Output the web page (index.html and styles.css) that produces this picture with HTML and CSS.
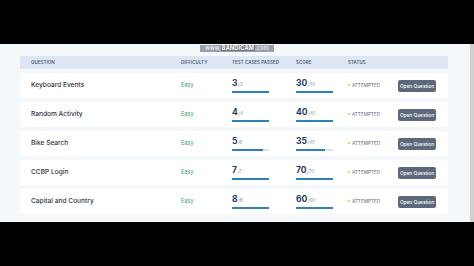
FILE: index.html
```html
<!DOCTYPE html>
<html>
<head>
<meta charset="utf-8">
<link rel="stylesheet" href="styles.css">
</head>
<body>
<div class="topbar"></div>
<div class="screen">
  <div class="watermark">www.<b>BANDICAM</b>.com</div>
  <div class="content">
    <div class="table">
      <div class="row head">
        <div>QUESTION</div>
        <div>DIFFICULTY</div>
        <div>TEST CASES PASSED</div>
        <div>SCORE</div>
        <div>STATUS</div>
        <div></div>
      </div>
      <div class="row item">
        <div class="q">Keyboard Events</div>
        <div class="easy">Easy</div>
        <div class="num"><div class="val"><b>3</b><span>/3</span></div><div class="bar"><i style="width:100%"></i></div></div>
        <div class="num"><div class="val"><b>30</b><span>/30</span></div><div class="bar"><i style="width:100%"></i></div></div>
        <div class="status"><span class="dot"></span>ATTEMPTED</div>
        <div class="act"><button class="btn">Open Question</button></div>
      </div>
      <div class="row item">
        <div class="q">Random Activity</div>
        <div class="easy">Easy</div>
        <div class="num"><div class="val"><b>4</b><span>/4</span></div><div class="bar"><i style="width:100%"></i></div></div>
        <div class="num"><div class="val"><b>40</b><span>/40</span></div><div class="bar"><i style="width:100%"></i></div></div>
        <div class="status"><span class="dot"></span>ATTEMPTED</div>
        <div class="act"><button class="btn">Open Question</button></div>
      </div>
      <div class="row item">
        <div class="q">Bike Search</div>
        <div class="easy">Easy</div>
        <div class="num"><div class="val"><b>5</b><span>/6</span></div><div class="bar"><i style="width:83%"></i></div></div>
        <div class="num"><div class="val"><b>35</b><span>/45</span></div><div class="bar"><i style="width:78%"></i></div></div>
        <div class="status"><span class="dot"></span>ATTEMPTED</div>
        <div class="act"><button class="btn">Open Question</button></div>
      </div>
      <div class="row item">
        <div class="q">CCBP Login</div>
        <div class="easy">Easy</div>
        <div class="num"><div class="val"><b>7</b><span>/7</span></div><div class="bar"><i style="width:100%"></i></div></div>
        <div class="num"><div class="val"><b>70</b><span>/70</span></div><div class="bar"><i style="width:100%"></i></div></div>
        <div class="status"><span class="dot"></span>ATTEMPTED</div>
        <div class="act"><button class="btn">Open Question</button></div>
      </div>
      <div class="row item">
        <div class="q">Capital and Country</div>
        <div class="easy">Easy</div>
        <div class="num"><div class="val"><b>8</b><span>/8</span></div><div class="bar"><i style="width:100%"></i></div></div>
        <div class="num"><div class="val"><b>60</b><span>/60</span></div><div class="bar"><i style="width:100%"></i></div></div>
        <div class="status"><span class="dot"></span>ATTEMPTED</div>
        <div class="act"><button class="btn">Open Question</button></div>
      </div>
    </div>
  </div>
  <div class="scrollbar"></div>
</div>
</body>
</html>
```
FILE: styles.css
```css
* { box-sizing: border-box; }
html, body { margin: 0; padding: 0; }
body {
  background: #000;
  width: 474px;
  height: 266px;
  overflow: hidden;
  font-family: Inter, "Noto Sans", sans-serif;
}
.topbar { height: 44px; background: #000; }
.screen {
  position: relative;
  height: 178px;
  background: #f5f8fb;
  display: flex;
}
.content {
  flex: 1;
  padding: 12px 0 0 20px;
}
.scrollbar {
  width: 4px;
  background: #cfd0d2;
}
.watermark {
  position: absolute;
  top: 1px;
  left: 200px;
  width: 74px;
  height: 7px;
  font-size: 5.5px;
  line-height: 7px;
  color: #fff;
  background: #9aa0a7;
  text-align: center;
  letter-spacing: 0.2px;
}
.watermark b { background: #707780; padding: 0 1px; font-weight: 700; }
.table {
  width: 428px;
  display: flex;
  flex-direction: column;
  gap: 4px;
}
.row {
  display: grid;
  grid-template-columns: 150px 51px 64px 52px 50px auto;
  align-items: center;
  padding-left: 11px;
}
.head {
  height: 13px;
  background: #dde6f2;
  font-size: 4.4px;
  font-weight: 600;
  color: #4e5d78;
  letter-spacing: 0.1px;
}
.item {
  height: 25px;
  background: #fff;
  border-radius: 2px;
  font-size: 6px;
  line-height: 1;
}
.q {
  font-size: 6.6px;
  font-weight: 500;
  color: #30353d;
}
.easy {
  font-size: 5.6px;
  color: #3f9d6f;
}
.num {
  display: flex;
  flex-direction: column;
  padding-top: 1px;
}
.val {
  height: 9px;
  font-size: 8.5px;
  line-height: 9px;
  white-space: nowrap;
}
.num b {
  font-size: 8.5px;
  font-weight: 700;
  color: #1f3a5c;
}
.num span {
  font-size: 4.6px;
  color: #8a94a3;
  margin-left: 0.5px;
}
.bar {
  width: 37px;
  height: 2px;
  background: #d5e6f3;
  margin-top: 3px;
}
.bar i { display: block; height: 100%; background: #2f7fb8; }
.status {
  display: flex;
  align-items: center;
  gap: 2px;
  font-size: 4.7px;
  color: #5b6678;
}
.dot {
  width: 2px;
  height: 2px;
  border-radius: 50%;
  background: #e8c23c;
}
.act { display: flex; }
.btn {
  display: block;
  border: 0;
  width: 38px;
  height: 12px;
  padding: 0;
  border-radius: 2px;
  background: #5d687a;
  color: #fff;
  font-family: Inter, "Noto Sans", sans-serif;
  font-size: 4.8px;
  font-weight: 500;
}
```
